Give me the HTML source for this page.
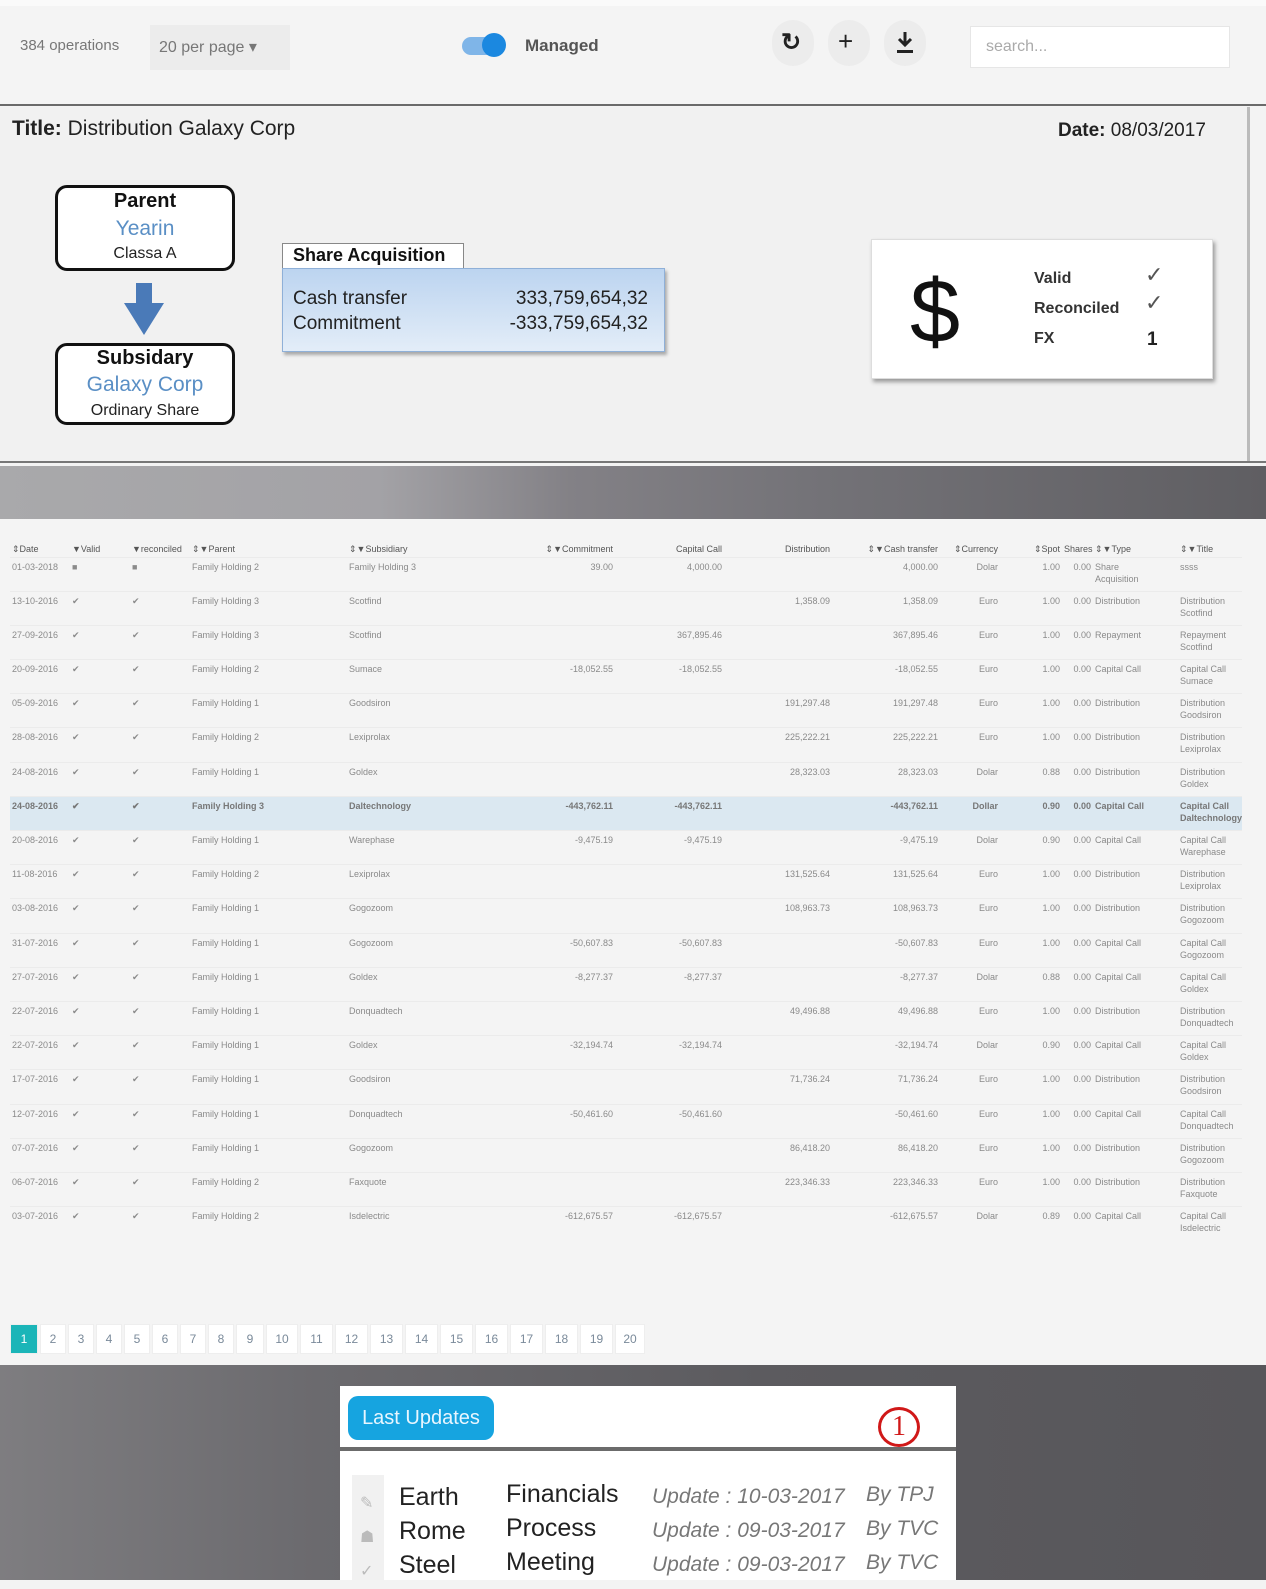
<!DOCTYPE html>
<html><head><meta charset="utf-8"><style>
*{margin:0;padding:0;box-sizing:border-box}
body{width:1266px;height:1580px;position:relative;background:#f3f3f3;font-family:"Liberation Sans",sans-serif;overflow:hidden}
.a{position:absolute}
.top{left:0;top:0;width:1266px;height:105px;background:#f4f4f4}
.hl{left:0;width:1266px;height:2px;background:#6a6a6a}
.panel{left:0;top:107px;width:1250px;height:355px;background:#f1f1f1;border-right:3px solid #bbb}
.box{border:3px solid #111;border-radius:12px;background:#fff;text-align:center;font-family:"Liberation Sans",sans-serif}
.band{left:0;top:466px;width:1266px;height:53px;background:linear-gradient(90deg,#a9a9ab 0%,#a3a2a6 30%,#838186 45%,#737277 65%,#5f5e62 100%)}
table{border-collapse:collapse;table-layout:fixed;font-size:9px;color:#8a8a8a;font-family:"Liberation Sans",sans-serif}
td{height:34.2px;vertical-align:top;padding:3px 2px 0 2px;border-top:1px solid #ebebeb;line-height:12px;white-space:nowrap;overflow:hidden}
td.r{text-align:right}
tr.h td{height:18px;color:#555;font-size:9px;border-top:none;padding-top:4px}
tr.sel td{background:#dbe8f1;font-weight:bold;color:#777}
.pg{top:1324px;height:30px;background:#fff;border:1px solid #eee;font-size:12px;color:#7a8a9a;text-align:center;line-height:28px}
.bot{left:0;top:1365px;width:1266px;height:215px;background:linear-gradient(90deg,#7e7d80 0%,#6b6a6e 25%,#5c5b5f 60%,#57565a 100%)}
</style></head><body>
<div class="a top"></div>
<div class="a" style="left:0;top:0;width:1266px;height:6px;background:#fafafa"></div>
<div class="a" style="left:20px;top:37px;font-size:15px;color:#777">384 operations</div>
<div class="a" style="left:150px;top:25px;width:140px;height:45px;background:#ececec"></div>
<div class="a" style="left:159px;top:37px;font-size:16px;color:#777">20 per page ▾</div>
<div class="a" style="left:462px;top:37px;width:40px;height:18px;border-radius:9px;background:#7fb5e8"></div>
<div class="a" style="left:482px;top:33px;width:24px;height:24px;border-radius:12px;background:#1b88e0"></div>
<div class="a" style="left:525px;top:36px;font-size:17px;font-weight:bold;color:#555">Managed</div>
<div class="a" style="left:772px;top:20px;width:42px;height:46px;border-radius:21px;background:#ececec"></div>
<div class="a" style="left:828px;top:20px;width:42px;height:46px;border-radius:21px;background:#ececec"></div>
<div class="a" style="left:884px;top:20px;width:42px;height:46px;border-radius:21px;background:#ececec"></div>
<div class="a" style="left:781px;top:28px;font-size:24px;font-weight:bold;color:#222">&#x21bb;</div>
<div class="a" style="left:838px;top:26px;font-size:26px;color:#222">+</div>
<svg class="a" style="left:895px;top:30px" width="20" height="24"><path d="M10 2v12M4 9l6 6 6-6" stroke="#222" stroke-width="3" fill="none"/><rect x="2" y="20" width="16" height="3" fill="#222"/></svg>
<div class="a" style="left:970px;top:26px;width:260px;height:42px;background:#fff;border:1px solid #e6e6e6"></div>
<div class="a" style="left:986px;top:38px;font-size:16px;color:#aaa">search...</div>
<div class="a hl" style="top:104px"></div>
<div class="a panel"></div>
<div class="a" style="left:12px;top:117px;font-size:21px;color:#222"><b>Title:</b> Distribution Galaxy Corp</div>
<div class="a" style="left:1058px;top:120px;font-size:19px;color:#222"><b>Date:</b> 08/03/2017</div>
<div class="a box" style="left:55px;top:185px;width:180px;height:86px">
<div style="font-size:20px;font-weight:bold;color:#111;line-height:26px">Parent</div>
<div style="font-size:21px;color:#5a8fc5;line-height:30px">Yearin</div>
<div style="font-size:16px;color:#222;line-height:20px">Classa A</div></div>
<div class="a" style="left:136px;top:283px;width:16px;height:22px;background:#4a7ab8"></div>
<svg class="a" style="left:124px;top:303px" width="40" height="34"><path d="M0 0h40L20 32z" fill="#4a7ab8"/></svg>
<div class="a box" style="left:55px;top:343px;width:180px;height:82px">
<div style="font-size:20px;font-weight:bold;color:#111;line-height:24px">Subsidary</div>
<div style="font-size:21px;color:#5a8fc5;line-height:30px">Galaxy Corp</div>
<div style="font-size:16px;color:#222;line-height:22px">Ordinary Share</div></div>
<div class="a" style="left:282px;top:243px;width:182px;height:26px;background:#fff;border:1px solid #888;font-size:18px;font-weight:bold;padding:1px 10px;color:#111">Share Acquisition</div>
<div class="a" style="left:282px;top:268px;width:383px;height:84px;background:linear-gradient(180deg,#bcd4f0,#e3edf8);border:1px solid #8fb0d8;box-shadow:2px 3px 3px #aaa"></div>
<div class="a" style="left:293px;top:286px;font-size:19px;color:#222;line-height:25px">Cash transfer<br>Commitment</div>
<div class="a" style="left:500px;top:286px;width:148px;font-size:19px;color:#222;line-height:25px;text-align:right">333,759,654,32<br>-333,759,654,32</div>
<div class="a" style="left:871px;top:239px;width:342px;height:140px;background:#fff;box-shadow:2px 3px 4px #999;border:1px solid #ddd"></div>
<div class="a" style="left:910px;top:262px;font-size:90px;color:#111;font-family:'Liberation Sans',sans-serif;font-weight:300;line-height:100px">$</div>
<div class="a" style="left:1034px;top:264px;font-size:16px;font-weight:bold;color:#333;line-height:30px">Valid<br>Reconciled<br>FX</div>
<div class="a" style="left:1145px;top:261px;font-size:22px;color:#555;line-height:28px">✓<br>✓</div>
<div class="a" style="left:1147px;top:329px;font-size:19px;font-weight:bold;color:#222">1</div>
<div class="a hl" style="top:461px;background:#777"></div>
<div class="a band"></div>
<div class="a" style="left:0;top:519px;width:1266px;height:846px;background:#f4f4f4"></div>
<table class="a" style="left:10px;top:539px;width:1232px">
<colgroup><col style="width:60px"><col style="width:60px"><col style="width:60px"><col style="width:157px"><col style="width:173px"><col style="width:95px"><col style="width:109px"><col style="width:108px"><col style="width:108px"><col style="width:60px"><col style="width:62px"><col style="width:31px"><col style="width:85px"><col style="width:64px"></colgroup>
<tr class="h"><td>⇕Date</td><td>▼Valid</td><td>▼reconciled</td><td>⇕▼Parent</td><td>⇕▼Subsidiary</td><td class="r">⇕▼Commitment</td><td class="r">Capital Call</td><td class="r">Distribution</td><td class="r">⇕▼Cash transfer</td><td class="r">⇕Currency</td><td class="r">⇕Spot</td><td class="r">Shares</td><td>⇕▼Type</td><td>⇕▼Title</td></tr>
<tr><td>01-03-2018</td><td>■</td><td>■</td><td>Family Holding 2</td><td>Family Holding 3</td><td class="r">39.00</td><td class="r">4,000.00</td><td></td><td class="r">4,000.00</td><td class="r">Dolar</td><td class="r">1.00</td><td class="r">0.00</td><td>Share<br>Acquisition</td><td>ssss</td></tr>
<tr><td>13-10-2016</td><td>✔</td><td>✔</td><td>Family Holding 3</td><td>Scotfind</td><td></td><td></td><td class="r">1,358.09</td><td class="r">1,358.09</td><td class="r">Euro</td><td class="r">1.00</td><td class="r">0.00</td><td>Distribution</td><td>Distribution<br>Scotfind</td></tr>
<tr><td>27-09-2016</td><td>✔</td><td>✔</td><td>Family Holding 3</td><td>Scotfind</td><td></td><td class="r">367,895.46</td><td></td><td class="r">367,895.46</td><td class="r">Euro</td><td class="r">1.00</td><td class="r">0.00</td><td>Repayment</td><td>Repayment<br>Scotfind</td></tr>
<tr><td>20-09-2016</td><td>✔</td><td>✔</td><td>Family Holding 2</td><td>Sumace</td><td class="r">-18,052.55</td><td class="r">-18,052.55</td><td></td><td class="r">-18,052.55</td><td class="r">Euro</td><td class="r">1.00</td><td class="r">0.00</td><td>Capital Call</td><td>Capital Call<br>Sumace</td></tr>
<tr><td>05-09-2016</td><td>✔</td><td>✔</td><td>Family Holding 1</td><td>Goodsiron</td><td></td><td></td><td class="r">191,297.48</td><td class="r">191,297.48</td><td class="r">Euro</td><td class="r">1.00</td><td class="r">0.00</td><td>Distribution</td><td>Distribution<br>Goodsiron</td></tr>
<tr><td>28-08-2016</td><td>✔</td><td>✔</td><td>Family Holding 2</td><td>Lexiprolax</td><td></td><td></td><td class="r">225,222.21</td><td class="r">225,222.21</td><td class="r">Euro</td><td class="r">1.00</td><td class="r">0.00</td><td>Distribution</td><td>Distribution<br>Lexiprolax</td></tr>
<tr><td>24-08-2016</td><td>✔</td><td>✔</td><td>Family Holding 1</td><td>Goldex</td><td></td><td></td><td class="r">28,323.03</td><td class="r">28,323.03</td><td class="r">Dolar</td><td class="r">0.88</td><td class="r">0.00</td><td>Distribution</td><td>Distribution<br>Goldex</td></tr>
<tr class="sel"><td>24-08-2016</td><td>✔</td><td>✔</td><td>Family Holding 3</td><td>Daltechnology</td><td class="r">-443,762.11</td><td class="r">-443,762.11</td><td></td><td class="r">-443,762.11</td><td class="r">Dollar</td><td class="r">0.90</td><td class="r">0.00</td><td>Capital Call</td><td>Capital Call<br>Daltechnology</td></tr>
<tr><td>20-08-2016</td><td>✔</td><td>✔</td><td>Family Holding 1</td><td>Warephase</td><td class="r">-9,475.19</td><td class="r">-9,475.19</td><td></td><td class="r">-9,475.19</td><td class="r">Dolar</td><td class="r">0.90</td><td class="r">0.00</td><td>Capital Call</td><td>Capital Call<br>Warephase</td></tr>
<tr><td>11-08-2016</td><td>✔</td><td>✔</td><td>Family Holding 2</td><td>Lexiprolax</td><td></td><td></td><td class="r">131,525.64</td><td class="r">131,525.64</td><td class="r">Euro</td><td class="r">1.00</td><td class="r">0.00</td><td>Distribution</td><td>Distribution<br>Lexiprolax</td></tr>
<tr><td>03-08-2016</td><td>✔</td><td>✔</td><td>Family Holding 1</td><td>Gogozoom</td><td></td><td></td><td class="r">108,963.73</td><td class="r">108,963.73</td><td class="r">Euro</td><td class="r">1.00</td><td class="r">0.00</td><td>Distribution</td><td>Distribution<br>Gogozoom</td></tr>
<tr><td>31-07-2016</td><td>✔</td><td>✔</td><td>Family Holding 1</td><td>Gogozoom</td><td class="r">-50,607.83</td><td class="r">-50,607.83</td><td></td><td class="r">-50,607.83</td><td class="r">Euro</td><td class="r">1.00</td><td class="r">0.00</td><td>Capital Call</td><td>Capital Call<br>Gogozoom</td></tr>
<tr><td>27-07-2016</td><td>✔</td><td>✔</td><td>Family Holding 1</td><td>Goldex</td><td class="r">-8,277.37</td><td class="r">-8,277.37</td><td></td><td class="r">-8,277.37</td><td class="r">Dolar</td><td class="r">0.88</td><td class="r">0.00</td><td>Capital Call</td><td>Capital Call<br>Goldex</td></tr>
<tr><td>22-07-2016</td><td>✔</td><td>✔</td><td>Family Holding 1</td><td>Donquadtech</td><td></td><td></td><td class="r">49,496.88</td><td class="r">49,496.88</td><td class="r">Euro</td><td class="r">1.00</td><td class="r">0.00</td><td>Distribution</td><td>Distribution<br>Donquadtech</td></tr>
<tr><td>22-07-2016</td><td>✔</td><td>✔</td><td>Family Holding 1</td><td>Goldex</td><td class="r">-32,194.74</td><td class="r">-32,194.74</td><td></td><td class="r">-32,194.74</td><td class="r">Dolar</td><td class="r">0.90</td><td class="r">0.00</td><td>Capital Call</td><td>Capital Call<br>Goldex</td></tr>
<tr><td>17-07-2016</td><td>✔</td><td>✔</td><td>Family Holding 1</td><td>Goodsiron</td><td></td><td></td><td class="r">71,736.24</td><td class="r">71,736.24</td><td class="r">Euro</td><td class="r">1.00</td><td class="r">0.00</td><td>Distribution</td><td>Distribution<br>Goodsiron</td></tr>
<tr><td>12-07-2016</td><td>✔</td><td>✔</td><td>Family Holding 1</td><td>Donquadtech</td><td class="r">-50,461.60</td><td class="r">-50,461.60</td><td></td><td class="r">-50,461.60</td><td class="r">Euro</td><td class="r">1.00</td><td class="r">0.00</td><td>Capital Call</td><td>Capital Call<br>Donquadtech</td></tr>
<tr><td>07-07-2016</td><td>✔</td><td>✔</td><td>Family Holding 1</td><td>Gogozoom</td><td></td><td></td><td class="r">86,418.20</td><td class="r">86,418.20</td><td class="r">Euro</td><td class="r">1.00</td><td class="r">0.00</td><td>Distribution</td><td>Distribution<br>Gogozoom</td></tr>
<tr><td>06-07-2016</td><td>✔</td><td>✔</td><td>Family Holding 2</td><td>Faxquote</td><td></td><td></td><td class="r">223,346.33</td><td class="r">223,346.33</td><td class="r">Euro</td><td class="r">1.00</td><td class="r">0.00</td><td>Distribution</td><td>Distribution<br>Faxquote</td></tr>
<tr><td>03-07-2016</td><td>✔</td><td>✔</td><td>Family Holding 2</td><td>Isdelectric</td><td class="r">-612,675.57</td><td class="r">-612,675.57</td><td></td><td class="r">-612,675.57</td><td class="r">Dolar</td><td class="r">0.89</td><td class="r">0.00</td><td>Capital Call</td><td>Capital Call<br>Isdelectric</td></tr>
</table>
<div class="a pg" style="left:10px;width:28px;background:#1bb5b8;color:#fff">1</div>
<div class="a pg" style="left:40px;width:26px">2</div>
<div class="a pg" style="left:68px;width:26px">3</div>
<div class="a pg" style="left:96px;width:26px">4</div>
<div class="a pg" style="left:124px;width:26px">5</div>
<div class="a pg" style="left:152px;width:26px">6</div>
<div class="a pg" style="left:180px;width:26px">7</div>
<div class="a pg" style="left:208px;width:26px">8</div>
<div class="a pg" style="left:236px;width:28px">9</div>
<div class="a pg" style="left:266px;width:32px">10</div>
<div class="a pg" style="left:300px;width:33px">11</div>
<div class="a pg" style="left:335px;width:33px">12</div>
<div class="a pg" style="left:370px;width:33px">13</div>
<div class="a pg" style="left:405px;width:33px">14</div>
<div class="a pg" style="left:440px;width:33px">15</div>
<div class="a pg" style="left:475px;width:33px">16</div>
<div class="a pg" style="left:510px;width:33px">17</div>
<div class="a pg" style="left:545px;width:33px">18</div>
<div class="a pg" style="left:580px;width:33px">19</div>
<div class="a pg" style="left:615px;width:30px">20</div>
<div class="a bot"></div>
<div class="a" style="left:340px;top:1386px;width:616px;height:194px;background:#fff"></div>
<div class="a" style="left:340px;top:1447px;width:616px;height:4px;background:#6b6b6b"></div>
<div class="a" style="left:348px;top:1396px;width:146px;height:44px;border-radius:10px;background:#16a4e0;color:#e8f6ff;font-size:20px;line-height:44px;text-align:center">Last Updates</div>
<div class="a" style="left:878px;top:1407px;width:42px;height:40px;border:3px solid #d01818;border-radius:50%;color:#d01818;font-size:28px;text-align:center;line-height:34px;font-family:'Liberation Serif',serif">1</div>
<div class="a" style="left:352px;top:1475px;width:32px;height:105px;background:#f1f1f1"></div>
<div class="a" style="left:360px;top:1487px;font-size:16px;color:#bbb;line-height:34px">✎<br>☗<br>✓</div>
<div class="a" style="left:399px;top:1480px;font-size:25px;color:#222;line-height:34px">Earth<br>Rome<br>Steel</div>
<div class="a" style="left:506px;top:1477px;font-size:25px;color:#222;line-height:34px">Financials<br>Process<br>Meeting</div>
<div class="a" style="left:652px;top:1480px;font-size:21px;color:#777;font-style:italic;line-height:34px">Update : 10-03-2017<br>Update : 09-03-2017<br>Update : 09-03-2017</div>
<div class="a" style="left:866px;top:1478px;font-size:21px;color:#777;font-style:italic;line-height:34px">By TPJ<br>By TVC<br>By TVC</div>
</body></html>
